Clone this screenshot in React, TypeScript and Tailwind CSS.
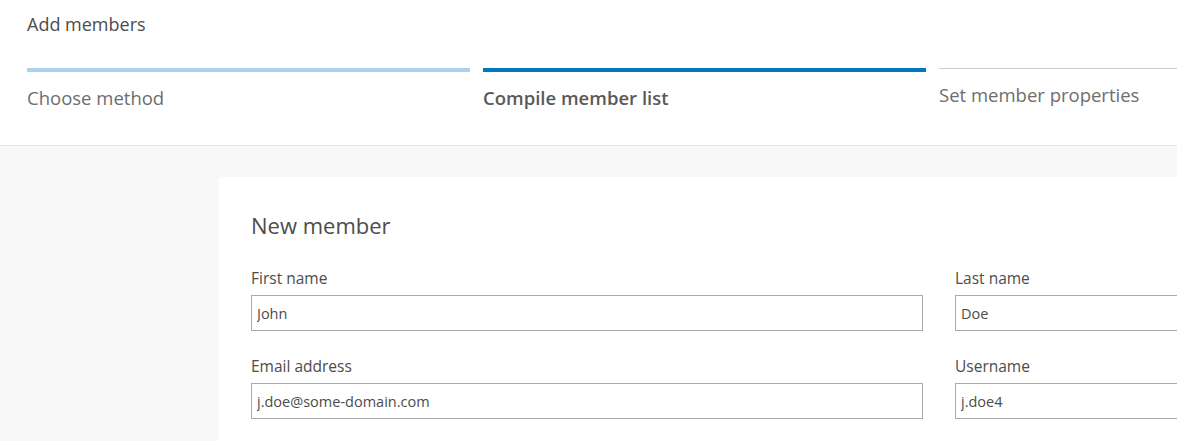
import React from "react";

type Step = { label: string; state: "done" | "active" | "todo" };

const STEPS: Step[] = [
  { label: "Choose method", state: "done" },
  { label: "Compile member list", state: "active" },
  { label: "Set member properties", state: "todo" },
];

function StepItem({ step }: { step: Step }) {
  const bar =
    step.state === "done"
      ? "border-t-4 border-[#a9d3ec]"
      : step.state === "active"
      ? "border-t-4 border-[#0079c1]"
      : "border-t border-[#cacaca]";
  return (
    <div className={`w-[443px] shrink-0 pt-[13px] ${bar}`}>
      <span
        className={`text-[18.5px] leading-[26px] ${
          step.state === "active" ? "font-semibold text-[#595959]" : "text-[#6e6e6e]"
        }`}
      >
        {step.label}
      </span>
    </div>
  );
}

function Field({ label, value }: { label: string; value: string }) {
  return (
    <label className="flex w-[672px] shrink-0 flex-col">
      <span className="mb-[8px] text-[15.5px] leading-[18px] text-[#4c4c4c]">{label}</span>
      <input
        readOnly
        value={value}
        className="h-[36px] w-full border border-[#a9a9a9] bg-white px-[5px] text-[14.5px] text-[#4c4c4c] outline-none"
      />
    </label>
  );
}

export default function App() {
  return (
    <div
      className="h-[441px] w-[1177px] overflow-hidden bg-[#f8f8f8]"
      style={{ fontFamily: "'Open Sans', sans-serif" }}
    >
      <header className="h-[146px] border-b border-[#e4e4e4] bg-white pl-[27px] pt-[12px]">
        <h1 className="text-[18px] leading-[24px] text-[#4c4c4c]">Add members</h1>
        <div className="mt-[32px] flex gap-[13px]">
          {STEPS.map((s) => (
            <StepItem key={s.label} step={s} />
          ))}
        </div>
      </header>

      <main className="pl-[219px] pt-[31px]">
        <section className="w-[1441px] bg-white px-[32px] pt-[33px] pb-[40px]">
          <h2 className="text-[22px] leading-[30px] text-[#4c4c4c]">New member</h2>
          <div className="mt-[29px] flex flex-col gap-[26px]">
            <div className="flex gap-[32px]">
              <Field label="First name" value="John" />
              <Field label="Last name" value="Doe" />
            </div>
            <div className="flex gap-[32px]">
              <Field label="Email address" value="j.doe@some-domain.com" />
              <Field label="Username" value="j.doe4" />
            </div>
          </div>
        </section>
      </main>
    </div>
  );
}
